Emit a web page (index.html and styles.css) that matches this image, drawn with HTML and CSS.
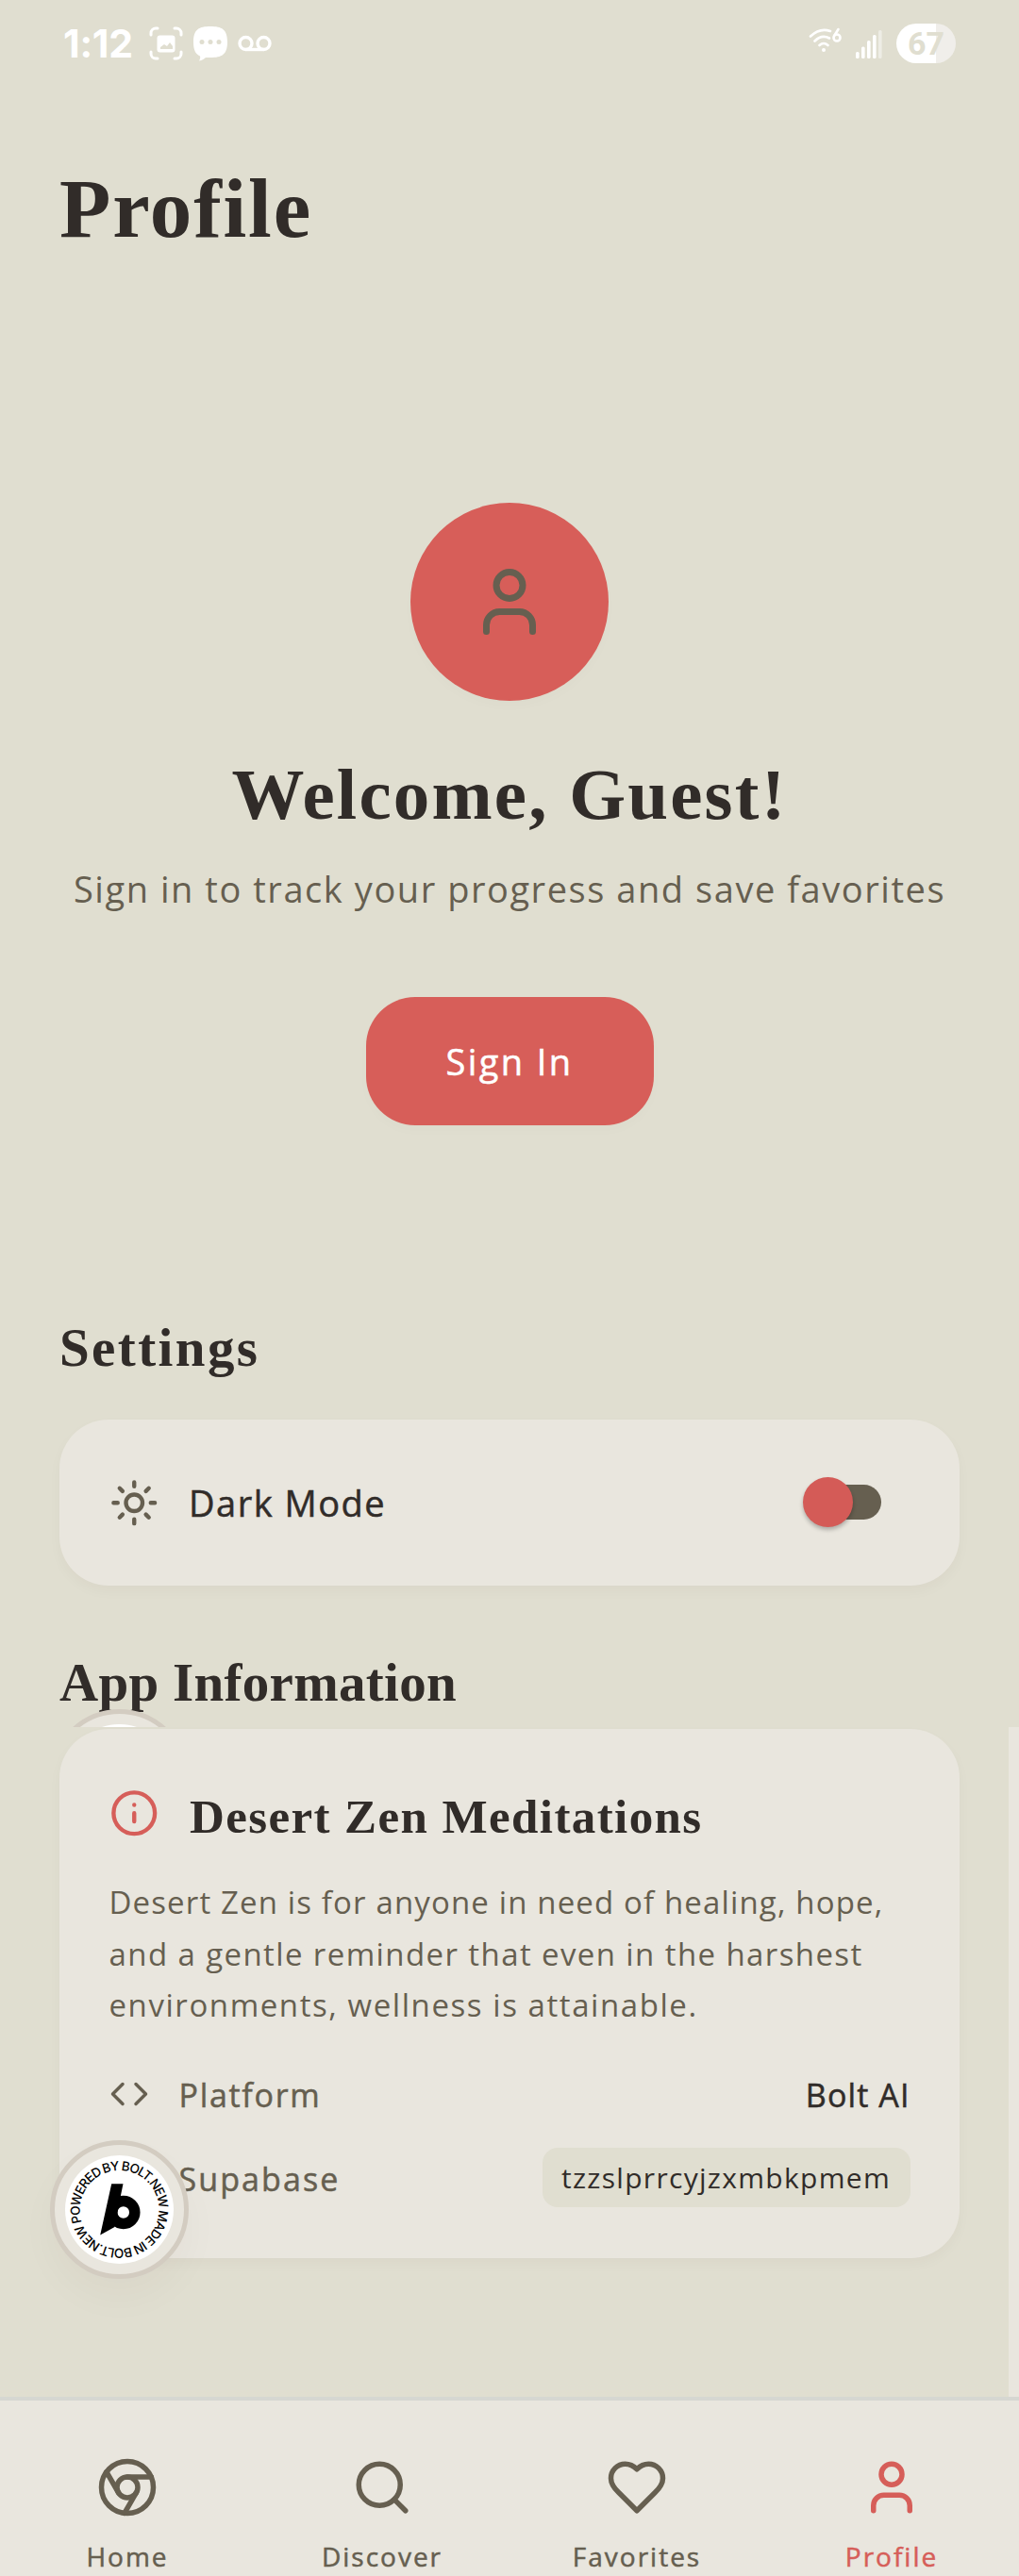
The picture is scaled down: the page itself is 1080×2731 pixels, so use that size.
FILE: index.html
```html
<!DOCTYPE html>
<html lang="en">
<head>
  <meta charset="UTF-8">
  <meta name="viewport" content="width=device-width, initial-scale=1.0">
  <title>Profile</title>
  <link rel="stylesheet" href="styles.css">
</head>
<body>
  <div class="status-bar">
    <div class="status-left">
      <span class="time">1:12</span>
      <svg class="status-icon" width="36" height="36" viewBox="0 0 36 36" fill="none" stroke="#fff" stroke-width="3" stroke-linecap="round">
        <path d="M2 9V7a5 5 0 0 1 5-5h2M27 2h2a5 5 0 0 1 5 5v2M34 27v2a5 5 0 0 1-5 5h-2M9 34H7a5 5 0 0 1-5-5v-2"/>
        <rect x="8.5" y="9.500" width="19" height="18" rx="3" fill="#fff" stroke="none"/>
        <path d="M12 24v-2l4-3 3 2 3-4 3 4v3z" fill="#e0ded0" stroke="none"/>
      </svg>
      <svg class="status-icon" width="36" height="38" viewBox="0 0 36 38">
        <path d="M18 1C30 1 36 4 36 17.500S30 34 18 34c-2 0-3 0-5 0-2 2-4 3-7 3.500 1-2 1.500-3 1-5C2 30 0 26 0 17.500 0 4 6 1 18 1z" fill="#fff"/>
        <circle cx="9" cy="17.500" r="2.500" fill="#e0ded0"/>
        <circle cx="18" cy="17.500" r="2.500" fill="#e0ded0"/>
        <circle cx="27" cy="17.500" r="2.500" fill="#e0ded0"/>
      </svg>
      <svg class="status-icon" width="36" height="18" viewBox="0 0 36 18" fill="none" stroke="#fff" stroke-width="3.400">
        <circle cx="8.500" cy="9" r="6.500"/>
        <circle cx="27.500" cy="9" r="6.500"/>
        <path d="M8.500 15.500h19"/>
      </svg>
    </div>
    <div class="status-right">
      <svg class="wifi" width="36" height="28" viewBox="0 0 36 28" fill="none" stroke="#fff" stroke-width="2.600" stroke-linecap="round">
        <path d="M2 9.500Q12 0 23 4M6.500 14.500Q14 7 22 11.500M11.500 19q4.500-4 9 0"/>
        <circle cx="16" cy="24" r="2" fill="#fff" stroke="none"/>
        <circle cx="30" cy="11" r="3.500"/>
        <path d="M27.500 8.500l4-6.500"/>
      </svg>
      <svg class="signal" width="28" height="31" viewBox="0 0 28 31" fill="#fff">
        <rect x="0" y="24" width="3.600" height="7" rx="1.500"/>
        <rect x="6" y="18.500" width="3.600" height="12.500" rx="1.500"/>
        <rect x="12" y="12" width="3.600" height="19" rx="1.500"/>
        <rect x="18" y="6" width="3.600" height="25" rx="1.500"/>
        <rect x="24" y="1" width="3.600" height="30" rx="1.500" opacity=".45"/>
      </svg>
      <span class="battery">67</span>
    </div>
  </div>

  <header>
    <h1>Profile</h1>
  </header>

  <main>
    <section class="guest">
      <div class="avatar">
        <svg class="icon" width="84" height="84" viewBox="0 0 24 24"><path d="M19 21v-2a4 4 0 0 0-4-4H9a4 4 0 0 0-4 4v2"/><circle cx="12" cy="7" r="4"/></svg>
      </div>
      <h2>Welcome, Guest!</h2>
      <p>Sign in to track your progress and save favorites</p>
      <button type="button" class="btn">Sign In</button>
    </section>

    <section class="settings">
      <h3>Settings</h3>
      <div class="card setting-row">
        <svg class="icon" width="52.500" height="52.500" viewBox="0 0 24 24"><circle cx="12" cy="12" r="4"/><path d="M12 2v2M12 20v2M4.930 4.930l1.410 1.410M17.660 17.660l1.410 1.410M2 12h2M20 12h2M6.340 17.660l-1.410 1.410M19.070 4.930l-1.410 1.410"/></svg>
        <span class="setting-label">Dark Mode</span>
        <span class="switch"><span class="thumb"></span></span>
      </div>
    </section>

    <section class="app-info">
      <h3>App Information</h3>
      <div class="badge-peek"><span class="ring"></span></div>
      <div class="card info-card">
        <div class="info-head">
          <svg class="icon accent" width="52.500" height="52.500" viewBox="0 0 24 24"><circle cx="12" cy="12" r="10"/><path d="M12 16v-4M12 8h.01"/></svg>
          <h4>Desert Zen Meditations</h4>
        </div>
        <p>Desert Zen is for anyone in need of healing, hope,<br><span class="line-2">and a gentle reminder that even in the harshest</span><br><span class="line-3">environments, wellness is attainable.</span></p>
        <div class="info-row">
          <svg class="icon" width="42" height="42" viewBox="0 0 24 24"><path d="M16 18l6-6-6-6M8 6l-6 6 6 6"/></svg>
          <span class="label">Platform</span>
          <span class="value">Bolt AI</span>
        </div>
        <div class="info-row">
          <span class="icon-space"></span>
          <span class="label">Supabase</span>
          <span class="pill">tzzslprrcyjzxmbkpmem</span>
        </div>
      </div>
      <div class="edge"></div>
      <!-- floating Bolt badge -->
      <div class="badge">
        <svg width="115" height="115" viewBox="-57.500 -57.500 115 115">
          <circle r="57.500" fill="#fff"/>
          <path id="ring" d="M-39.700 13.700A42 42 0 0 1 39.700 -13.700A42 42 0 0 1 -39.700 13.700" fill="none"/>
          <text class="badge-text"><textPath href="#ring" textLength="260">POWERED BY BOLT.NEW MADE IN BOLT.NEW</textPath></text>
          <path d="M-8.300 -27.300H4L-1 -3L-5 18.500L-20.300 27Z"/>
          <circle cx="4.300" cy="3" r="12" fill="none" stroke="#000" stroke-width="11.500"/>
        </svg>
      </div>
    </section>
  </main>

  <nav>
    <a class="tab">
      <svg class="icon" width="66" height="66" viewBox="0 0 24 24"><circle cx="12" cy="12" r="10"/><circle cx="12" cy="12" r="4"/><path d="M21.170 8H12M3.950 6.060L8.540 14M10.880 21.940L15.460 14"/></svg>
      <span>Home</span>
    </a>
    <a class="tab">
      <svg class="icon" width="66" height="66" viewBox="0 0 24 24"><circle cx="11" cy="11" r="8"/><path d="M21 21l-4.300-4.300"/></svg>
      <span>Discover</span>
    </a>
    <a class="tab">
      <svg class="icon" width="66" height="66" viewBox="0 0 24 24"><path d="M19 14c1.490-1.460 3-3.210 3-5.500A5.500 5.500 0 0 0 16.500 3c-1.760 0-3 .5-4.500 2-1.500-1.500-2.740-2-4.500-2A5.500 5.500 0 0 0 2 8.500c0 2.300 1.500 4.050 3 5.500l7 7Z"/></svg>
      <span>Favorites</span>
    </a>
    <a class="tab active">
      <svg class="icon" width="66" height="66" viewBox="0 0 24 24"><path d="M19 21v-2a4 4 0 0 0-4-4H9a4 4 0 0 0-4 4v2"/><circle cx="12" cy="7" r="4"/></svg>
      <span>Profile</span>
    </a>
  </nav>
</body>
</html>
```
FILE: styles.css
```css
* { box-sizing: border-box; }
body { margin: 0; height: 2731px; display: flex; flex-direction: column; overflow: hidden; background: #e0ded0; color: #312c29; font-family: "Open Sans", "Liberation Sans", sans-serif; }
h1, h2, h3, h4, p { margin: 0; }
h1, h2, h3, h4 { font-family: "Liberation Serif", serif; font-weight: 700; white-space: nowrap; }
svg { display: block; flex: none; }
.icon { fill: none; stroke: #665f50; stroke-width: 2; stroke-linecap: round; stroke-linejoin: round; }
.icon.accent { stroke: #d65e59; }

.status-bar { height: 92px; flex: none; padding: 0 67px; display: flex; justify-content: space-between; align-items: center; color: #fff; }
.status-left, .status-right { display: flex; align-items: center; }
.time { font-family: Inter, sans-serif; font-weight: 700; font-size: 41px; line-height: 50px; width: 91px; letter-spacing: -0.3px; }
.status-icon { margin-right: 11px; }
.wifi { margin: -6px 14px 0 0; }
.signal { margin-right: 15px; }
.battery { width: 63px; height: 42px; border-radius: 21px; background: linear-gradient(90deg, #fff 42px, #f0eeea 42px); color: #e0ded0; font: 700 34px/42px Roboto, sans-serif; text-align: center; }

header { flex: none; padding: 74px 63px 0; }
h1 { font-size: 89px; line-height: 110px; letter-spacing: 1.8px; }

main { flex: 1; padding: 257px 63px 0; }
.guest { display: flex; flex-direction: column; align-items: center; }
.avatar { width: 210px; height: 210px; border-radius: 50%; background: #d75e59; display: flex; align-items: center; justify-content: center; box-shadow: 0 6px 12px rgba(49,44,41,0.015); }
.guest h2 { margin-top: 51px; font-size: 77px; line-height: 96px; letter-spacing: 2.2px; }
.guest p { margin-top: 22px; font-size: 38px; line-height: 60px; letter-spacing: 1.55px; color: #665f50; white-space: nowrap; }
.btn { margin-top: 85px; width: 305px; height: 136px; border: none; border-radius: 52px; background: #d75e59; color: #fff; font: 500 38px/60px "Open Sans", sans-serif; letter-spacing: 2.4px; padding: 0; box-shadow: 0 6px 12px rgba(49,44,41,0.015); }
.btn, .label, .value, .setting-label, .tab span { -webkit-text-stroke: 0.5px currentColor; }

h3 { font-size: 57px; line-height: 70px; }
.card { background: #e9e6de; border-radius: 52px; box-shadow: 0 6px 14px rgba(49,44,41,0.03); }
.settings { margin-top: 201px; }
.settings h3 { letter-spacing: 2.4px; }
.setting-row { margin-top: 41px; height: 176px; padding: 0 83px 0 52.5px; display: flex; align-items: center; }
.setting-label { margin-left: 32px; font-size: 38px; line-height: 60px; letter-spacing: 1.5px; }
.switch { margin: 0 0 2px auto; width: 75px; height: 37px; border-radius: 19px; background: #665f50; display: flex; align-items: center; }
.thumb { flex: none; width: 53px; height: 53px; margin-left: -8px; border-radius: 50%; background: #d45b57; box-shadow: 0 3px 4px rgba(0,0,0,0.25); }

.app-info { position: relative; margin-top: 68px; }
.app-info h3 { letter-spacing: 0.3px; }
/* sliver of the badge left above the card */
.badge-peek { position: absolute; left: -10px; top: 63px; width: 147px; height: 19px; overflow: hidden; }
.ring { display: block; width: 147px; height: 147px; border: 5px solid #d3ccc1; border-radius: 50%; background: radial-gradient(circle, #fff 57px, #e9e6de 58px); }
.info-card { margin-top: 14px; height: 561px; padding: 60px 52.5px 54px; }
.info-head { display: flex; align-items: flex-start; }
.info-head .icon { margin-top: 3px; }
h4 { margin-left: 33px; font-size: 51px; line-height: 66px; letter-spacing: 1.4px; }
.info-card p { margin-top: 31px; font-size: 33px; line-height: 54.6px; letter-spacing: 1.14px; color: #665f50; white-space: nowrap; }
.line-2 { letter-spacing: 1.4px; }
.line-3 { letter-spacing: 1.57px; }
.info-row { display: flex; align-items: center; height: 55px; margin-top: 39px; font-size: 34px; line-height: 50px; }
.info-row + .info-row { height: 63px; margin-top: 29px; }
.icon-space { width: 42px; }
.label { margin-left: 32px; padding-top: 1px; font-weight: 500; letter-spacing: 1.7px; color: #665f50; }
.info-row + .info-row .label { padding-top: 3px; letter-spacing: 2.1px; }
.value { margin-left: auto; padding-top: 1px; letter-spacing: 1.1px; }
.pill { margin-left: auto; width: 390px; height: 63px; padding-top: 2px; border-radius: 16px; background: #e0ded0; font-size: 30px; line-height: 59px; letter-spacing: 1.3px; text-align: center; }
.edge { position: absolute; left: 1006px; top: 82px; width: 11px; height: 710px; background: #e9e6de; }
.badge { position: absolute; left: -10px; top: 520px; width: 147px; height: 147px; border: 5px solid #d3ccc1; border-radius: 50%; background: #e9e6de; display: flex; align-items: center; justify-content: center; box-shadow: 0 20px 40px rgba(49,44,41,0.03); }
.badge-text { font: 500 13.5px Inter, sans-serif; }

nav { position: relative; flex: none; height: 190px; border-top: 4px solid #d6d7d2; background: #e9e6de; display: flex; }
.tab { flex: 1; padding-top: 59px; display: flex; flex-direction: column; align-items: center; color: #665f50; }
.tab span { margin-top: 20px; font-size: 28px; line-height: 40px; letter-spacing: 2px; font-weight: 500; }
.active { color: #d65e59; }
.active .icon { stroke: #d65e59; }
```
